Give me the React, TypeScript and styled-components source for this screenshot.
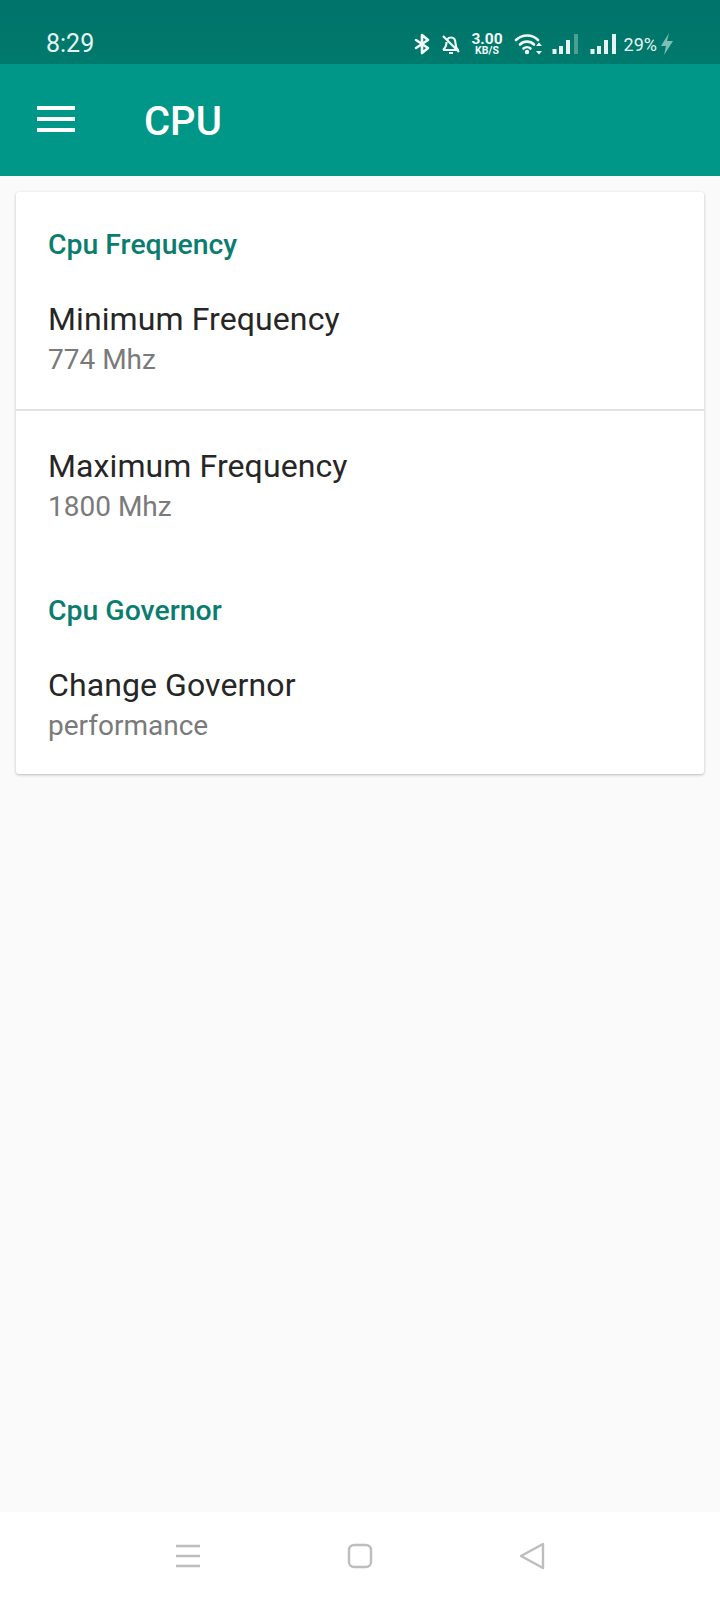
import styled, { createGlobalStyle } from "styled-components";

const GlobalStyle = createGlobalStyle`
  html, body {
    margin: 0;
    padding: 0;
    background: #fafafa;
    font-family: Roboto, "Liberation Sans", sans-serif;
  }
`;

const Screen = styled.div`
  width: 720px;
  height: 1600px;
  display: flex;
  flex-direction: column;
  background: #fafafa;
  overflow: hidden;
`;

const StatusBar = styled.div`
  height: 64px;
  box-sizing: border-box;
  padding: 25px 46px 0 46px;
  display: flex;
  justify-content: space-between;
  align-items: flex-start;
  background: linear-gradient(#00726a, #007a6c);
  color: #e6f5f2;
`;

const Clock = styled.span`
  font-size: 25px;
  line-height: 38px;
`;

const StatusIcons = styled.div`
  display: flex;
  align-items: center;
  height: 38px;
`;

const BellIcon = styled.svg`
  margin-left: 10px;
`;

const Speed = styled.div`
  display: flex;
  flex-direction: column;
  align-items: center;
  font-weight: 700;
  margin: 0 11px 0 9px;
  color: #f1faf8;
`;

const SpeedValue = styled.span`
  font-size: 15.5px;
  line-height: 14px;
`;

const SpeedUnit = styled.span`
  font-size: 10.5px;
  line-height: 10px;
`;

const Battery = styled.span`
  font-size: 18px;
  margin: 0 3px 0 7px;
`;

const SignalSvg = styled.svg<{ $left: number }>`
  margin-left: ${(p) => p.$left}px;
`;

const Toolbar = styled.header`
  height: 112px;
  flex: none;
  display: flex;
  align-items: center;
  padding-left: 37px;
  background: #009688;
  color: #fff;
`;

const MenuIcon = styled.div`
  width: 38px;
  height: 26px;
  margin-top: -2px;
  display: flex;
  flex-direction: column;
  justify-content: space-between;

  span {
    height: 4px;
    background: #fff;
  }
`;

const Title = styled.h1`
  margin: 3px 0 0 69px;
  font-size: 40px;
  font-weight: 500;
  line-height: 44px;
`;

const Main = styled.main`
  flex: 1;
  padding: 16px 16px 0;
`;

const Card = styled.section`
  height: 582px;
  box-sizing: border-box;
  padding-top: 33px;
  background: #fff;
  border-radius: 3px;
  box-shadow: 0 1px 3px rgba(0, 0, 0, 0.25);
`;

const Heading = styled.h2<{ $gap?: number }>`
  margin: ${(p) => p.$gap ?? 0}px 0 0;
  padding-left: 32px;
  font-size: 28.4px;
  font-weight: 500;
  line-height: 40px;
  color: #0b7d6f;
`;

const Row = styled.div<{ $top: number; $divided?: boolean }>`
  padding: ${(p) => p.$top}px 32px 0;
  height: ${(p) => (p.$divided ? "110px" : "auto")};
  border-bottom: ${(p) => (p.$divided ? "2px solid #e2e2e2" : "none")};
`;

const RowTitle = styled.div`
  font-size: 32px;
  letter-spacing: 0.1px;
  line-height: 40px;
  color: #262626;
`;

const RowValue = styled.div`
  font-size: 28px;
  line-height: 40px;
  margin-top: 1px;
  color: #7a7a7a;
`;

const NavBar = styled.nav`
  height: 88px;
  flex: none;
  display: flex;
  align-items: center;
  gap: 146px;
  padding-left: 175px;
  background: #fff;
`;

const signalBars = [
  { x: 0.5, y: 16, h: 5 },
  { x: 7, y: 13, h: 8 },
  { x: 14, y: 7, h: 14 },
];

function SignalIcon({ fourthBar, left }: { fourthBar: string; left: number }) {
  return (
    <SignalSvg $left={left} width="27" height="22" viewBox="0 0 27 22">
      {signalBars.map((bar) => (
        <rect key={bar.x} x={bar.x} y={bar.y} width="4" height={bar.h} fill="#e6f5f2" />
      ))}
      <rect x="22" y="1" width="4" height="20" fill={fourthBar} />
    </SignalSvg>
  );
}

function App() {
  return (
    <Screen>
      <GlobalStyle />
      <StatusBar>
        <Clock>8:29</Clock>
        <StatusIcons>
          <svg width="16" height="22" viewBox="0 0 16 22" fill="none" stroke="#f1faf8" strokeWidth="2.6" strokeLinecap="round" strokeLinejoin="round">
            <path d="M2 7l12 8-6 5V2l6 5-12 8" />
          </svg>
          <BellIcon width="22" height="22" viewBox="0 0 22 22" fill="none" stroke="#f1faf8" strokeWidth="2.2" strokeLinejoin="round">
            <path d="M3 17h15c-2-2-2.500-4-2.500-6.500C15.500 7 14 4.500 11 4.500c-1.500 0-2.700.6-3.400 1.700M6.500 9c-.1 3.200-1 6-3.500 8M9 20h4M3 3l16 16" />
          </BellIcon>
          <Speed>
            <SpeedValue>3.00</SpeedValue>
            <SpeedUnit>KB/S</SpeedUnit>
          </Speed>
          <svg width="28" height="22" viewBox="0 0 28 22" fill="none" stroke="#f1faf8" strokeWidth="2.6" strokeLinecap="round">
            <path d="M2 7c6.500-6 16-6 22 0M6 11.500c4-3.800 10-3.800 14 0M9.500 15.500c2-1.700 5-1.700 7 0" />
            <circle cx="13" cy="19" r="2.200" fill="#f1faf8" stroke="none" />
            <path d="M25 9.500l3 3.500h-6zM25 21.500l3-3.500h-6z" fill="#f1faf8" stroke="none" />
          </svg>
          <SignalIcon left={10} fourthBar="#4aa093" />
          <SignalIcon left={11} fourthBar="#e6f5f2" />
          <Battery>29%</Battery>
          <svg width="14" height="24" viewBox="0 0 14 24">
            <path d="M9 1L1 14h5l-2 9 9-14H7z" fill="#7cc0b5" />
          </svg>
        </StatusIcons>
      </StatusBar>
      <Toolbar>
        <MenuIcon>
          <span />
          <span />
          <span />
        </MenuIcon>
        <Title>CPU</Title>
      </Toolbar>
      <Main>
        <Card>
          <Heading>Cpu Frequency</Heading>
          <Row $top={34} $divided>
            <RowTitle>Minimum Frequency</RowTitle>
            <RowValue>774 Mhz</RowValue>
          </Row>
          <Row $top={35}>
            <RowTitle>Maximum Frequency</RowTitle>
            <RowValue>1800 Mhz</RowValue>
          </Row>
          <Heading $gap={64}>Cpu Governor</Heading>
          <Row $top={34}>
            <RowTitle>Change Governor</RowTitle>
            <RowValue>performance</RowValue>
          </Row>
        </Card>
      </Main>
      <NavBar>
        <svg width="26" height="24" viewBox="0 0 26 24" stroke="#bdbdbd" strokeWidth="2.4">
          <path d="M1 2h24M1 12h24M1 22h24" />
        </svg>
        <svg width="26" height="26" viewBox="0 0 26 26" fill="none" stroke="#bdbdbd" strokeWidth="2.4">
          <rect x="2" y="2" width="22" height="22" rx="5" />
        </svg>
        <svg width="26" height="28" viewBox="0 0 26 28" fill="none" stroke="#bdbdbd" strokeWidth="2.4" strokeLinejoin="round">
          <path d="M24 2v24L2 14z" />
        </svg>
      </NavBar>
    </Screen>
  );
}

export default App;
